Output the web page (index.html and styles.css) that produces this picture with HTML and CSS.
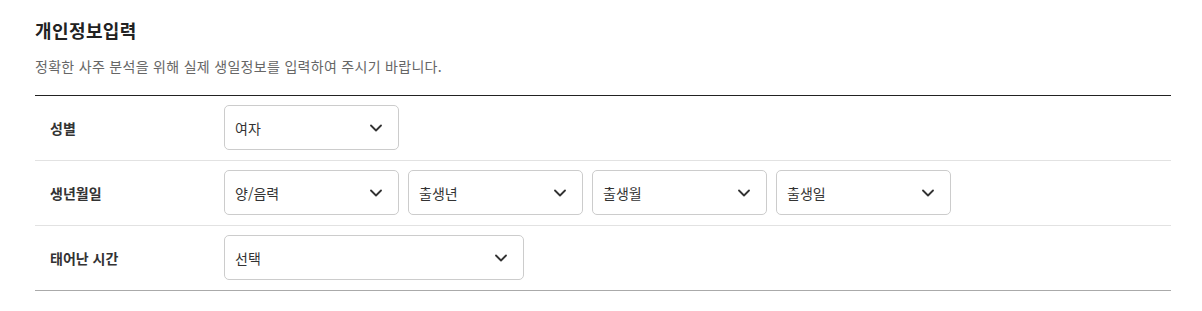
FILE: index.html
```html
<!DOCTYPE html>
<html lang="ko">
<head>
<meta charset="utf-8">
<link rel="stylesheet" href="styles.css">
</head>
<body>
<section class="wrap">
  <h2 class="title">개인정보입력</h2>
  <p class="desc">정확한 사주 분석을 위해 실제 생일정보를 입력하여 주시기 바랍니다.</p>
  <div class="form">
    <div class="row">
      <div class="label">성별</div>
      <div class="fields">
        <div class="select"><span>여자</span><svg class="chev" viewBox="0 0 12 8"><path d="M1 1.5 6 6.5 11 1.5"/></svg></div>
      </div>
    </div>
    <div class="row">
      <div class="label">생년월일</div>
      <div class="fields">
        <div class="select"><span>양/음력</span><svg class="chev" viewBox="0 0 12 8"><path d="M1 1.5 6 6.5 11 1.5"/></svg></div>
        <div class="select"><span>출생년</span><svg class="chev" viewBox="0 0 12 8"><path d="M1 1.5 6 6.5 11 1.5"/></svg></div>
        <div class="select"><span>출생월</span><svg class="chev" viewBox="0 0 12 8"><path d="M1 1.5 6 6.5 11 1.5"/></svg></div>
        <div class="select"><span>출생일</span><svg class="chev" viewBox="0 0 12 8"><path d="M1 1.5 6 6.5 11 1.5"/></svg></div>
      </div>
    </div>
    <div class="row last">
      <div class="label">태어난 시간</div>
      <div class="fields">
        <div class="select wide"><span>선택</span><svg class="chev" viewBox="0 0 12 8"><path d="M1 1.5 6 6.5 11 1.5"/></svg></div>
      </div>
    </div>
  </div>
</section>
</body>
</html>
```
FILE: styles.css
```css
* { box-sizing: border-box; }
html, body { margin: 0; padding: 0; background: #fff; }
body {
  font-family: "Noto Sans CJK KR", "Noto Sans", sans-serif;
  color: #222;
}
.wrap { padding: 18px 31px 0 35px; }
.title {
  margin: 0;
  font-size: 18px;
  font-weight: 700;
  line-height: 24px;
  letter-spacing: 0.4px;
  color: #222;
}
.desc {
  margin: 14px 0 0;
  font-size: 14px;
  line-height: 20px;
  letter-spacing: 0.3px;
  color: #666;
}
.form {
  margin-top: 19px;
  border-top: 1px solid #222;
  border-bottom: 1px solid #aaa;
}
.row {
  display: flex;
  align-items: center;
  height: 65px;
  border-bottom: 1px solid #e2e2e2;
}
.row.last { border-bottom: 0; height: 64px; }
.label {
  width: 189px;
  padding-left: 15px;
  font-size: 14px;
  font-weight: 700;
  color: #333;
}
.fields { display: flex; gap: 9px; margin-bottom: 1px; }
.select {
  width: 175px;
  height: 45px;
  border: 1px solid #ccc;
  border-radius: 5px;
  display: flex;
  align-items: center;
  justify-content: space-between;
  padding: 0 16px 0 10px;
  font-size: 14px;
  color: #333;
}
.select.wide { width: 300px; }
.chev { width: 12px; height: 8px; }
.chev path { fill: none; stroke: #333; stroke-width: 1.8; stroke-linecap: round; stroke-linejoin: round; }
```
